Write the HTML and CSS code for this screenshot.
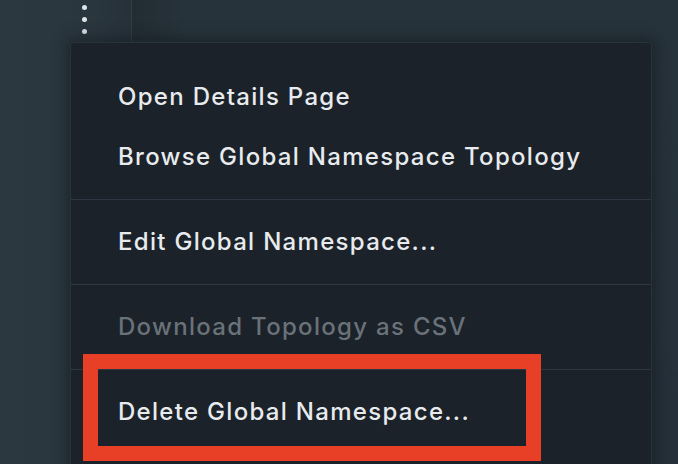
FILE: index.html
```html
<!DOCTYPE html>
<html>
<head>
<meta charset="utf-8">
<link rel="stylesheet" href="styles.css">
</head>
<body>
<div class="page">
  <div class="side">
    <div class="kebab"><span></span><span></span><span></span></div>
  </div>
  <div class="main">
    <div class="topbar"></div>
  </div>
</div>
<div class="menu">
  <div class="section first">
    <div class="item">Open Details Page</div>
    <div class="item">Browse Global Namespace Topology</div>
  </div>
  <div class="section">
    <div class="item">Edit Global Namespace...</div>
  </div>
  <div class="section">
    <div class="item disabled">Download Topology as CSV</div>
  </div>
  <div class="section">
    <div class="item">Delete Global Namespace...</div>
  </div>
</div>
<div class="highlight"></div>
</body>
</html>
```
FILE: styles.css
```css
html, body {
  margin: 0;
  padding: 0;
  width: 678px;
  height: 464px;
  overflow: hidden;
  background: #27323a;
  font-family: "Inter", "Noto Sans", sans-serif;
}
.page {
  display: flex;
  height: 464px;
}
.side {
  width: 131px;
  background: linear-gradient(90deg, #2c3840 0%, #2a363e 70%, #26313a 100%);
  border-right: 1px solid #323e47;
  position: relative;
}
.kebab {
  display: flex;
  flex-direction: column;
  align-items: center;
  gap: 7px;
  width: 6px;
  margin: 5px 0 0 81px;
}
.kebab span {
  width: 5px;
  height: 5px;
  border-radius: 50%;
  background: #dfe4e8;
}
.main {
  flex: 1;
  background: linear-gradient(180deg, #27333b 0%, #25303a 100%);
}
.topbar {
  height: 40px;
  background: linear-gradient(90deg, #222c33 0%, #27333b 10%, #27333b 100%);
}
.menu {
  position: absolute;
  left: 70px;
  top: 42px;
  width: 582px;
  height: 440px;
  background: #1c2229;
  border: 1px solid #27323a;
  border-radius: 4px;
  box-shadow: 0 0 14px 4px rgba(18, 24, 30, 0.55);
  padding-top: 12px;
  box-sizing: border-box;
}
.section {
  padding: 12px 0;
  border-top: 1px solid #2b3741;
}
.section.first {
  border-top: none;
}
.item {
  height: 60px;
  line-height: 60px;
  padding-left: 47px;
  font-size: 24px;
  font-weight: 500;
  letter-spacing: 1.3px;
  color: #e8ebee;
  white-space: nowrap;
}
.item.disabled {
  color: #6a7279;
}
.highlight {
  position: absolute;
  left: 83px;
  top: 354px;
  width: 428px;
  height: 77px;
  border: 15px solid #e83f27;
}
```
